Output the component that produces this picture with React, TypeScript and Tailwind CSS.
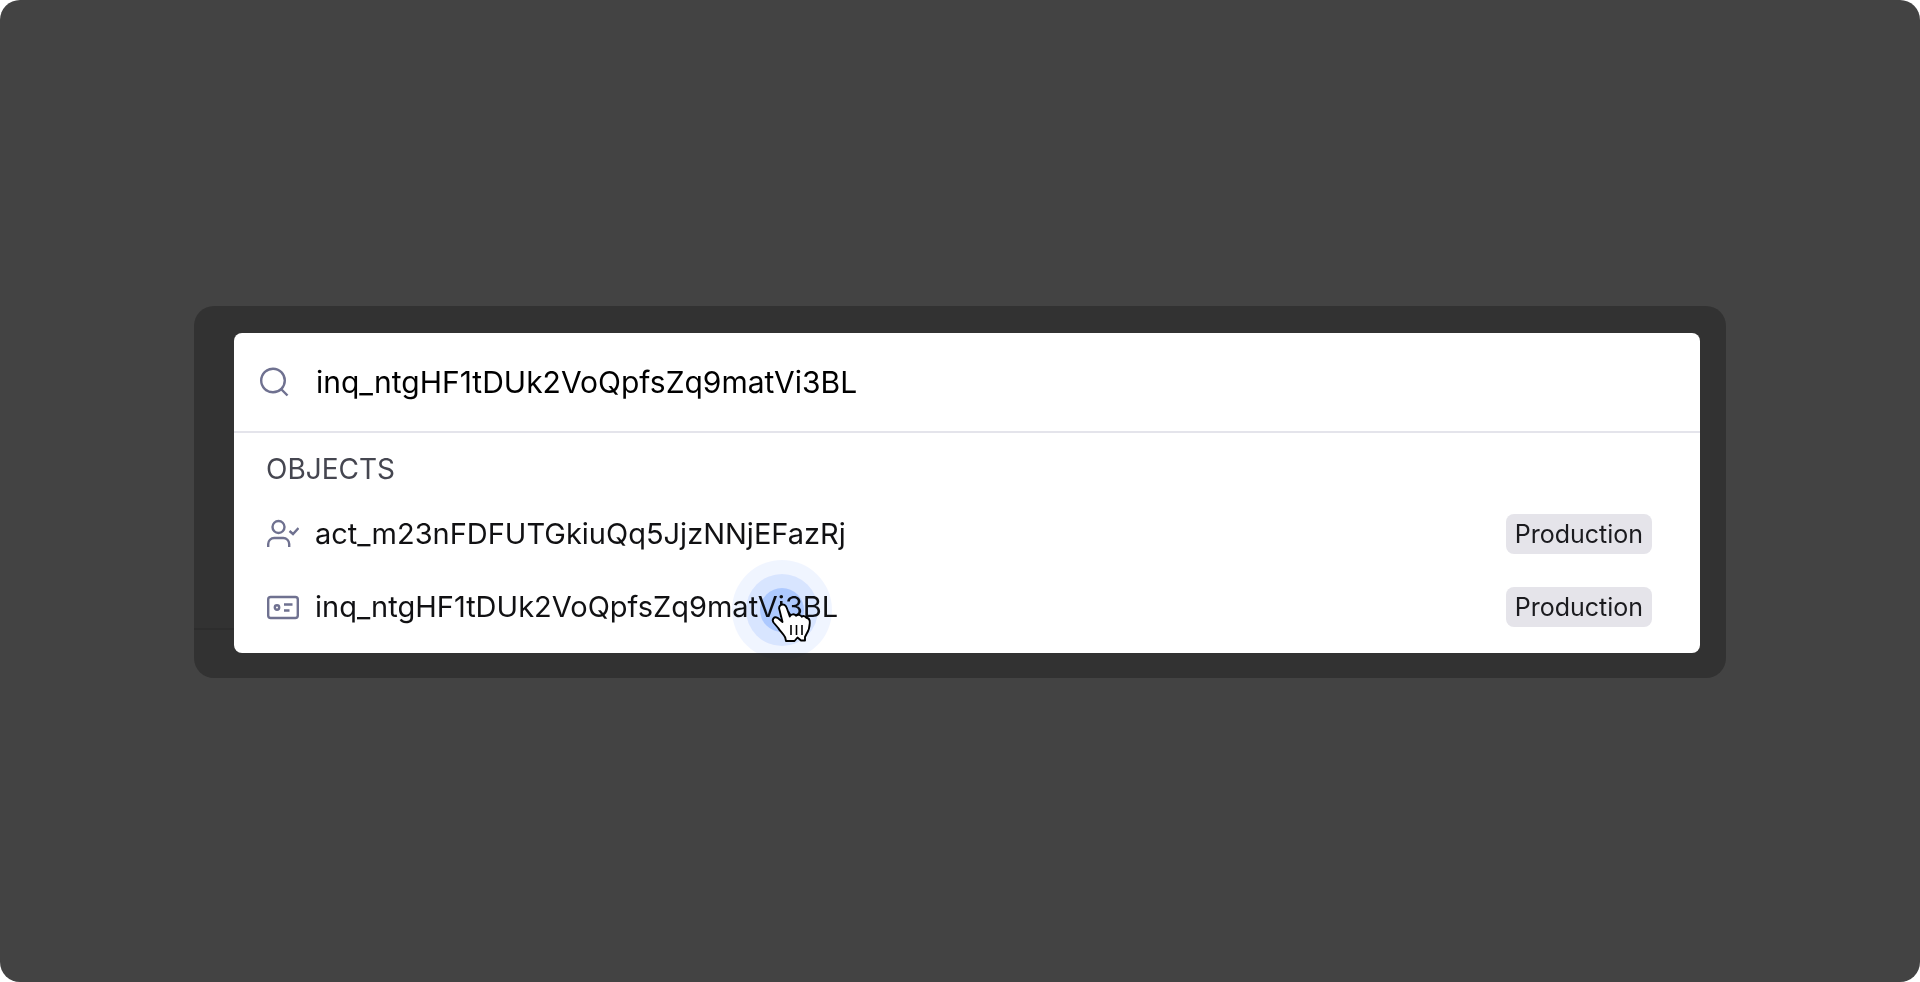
import React from "react";

interface SearchResult {
  id: string;
  type: "account" | "inquiry";
  environment: string;
}

const results: SearchResult[] = [
  { id: "act_m23nFDFUTGkiuQq5JjzNNjEFazRj", type: "account", environment: "Production" },
  { id: "inq_ntgHF1tDUk2VoQpfsZq9matVi3BL", type: "inquiry", environment: "Production" },
];

const SearchIcon: React.FC = () => (
  <svg width="32" height="32" viewBox="0 0 32 32" fill="none" stroke="#6f7190" strokeWidth="2.4" aria-hidden="true">
    <circle cx="15" cy="14.5" r="11.8" />
    <path d="M22.5 22.5l7 7" />
  </svg>
);

const AccountIcon: React.FC = () => (
  <svg width="32" height="32" viewBox="0 0 32 32" fill="none" stroke="#6f7190" strokeWidth="2.4" aria-hidden="true">
    <circle cx="11.5" cy="9" r="6" />
    <path d="M1.2 29v-3a6 6 0 0 1 6-6h9a6 6 0 0 1 6 6v3" />
    <path d="M22.5 13l3.500 3 5.500-6" />
  </svg>
);

const InquiryIcon: React.FC = () => (
  <svg width="32" height="32" viewBox="0 0 32 32" fill="none" stroke="#6f7190" strokeWidth="2.4" aria-hidden="true">
    <rect x="1.2" y="6" width="29.6" height="21" rx="2.5" />
    <circle cx="10" cy="16.5" r="2.2" />
    <path d="M17 13.5h8.5M17 19.5h5.5" />
  </svg>
);

const ClickMarker: React.FC = () => (
  <div className="pointer-events-none absolute -top-2.5 left-[498px]" aria-hidden="true">
    <svg className="mix-blend-multiply" width="100" height="100" viewBox="0 0 100 100">
      <circle cx="50" cy="50" r="50" fill="#0058ff" fillOpacity="0.06" />
      <circle cx="50" cy="50" r="36" fill="#0058ff" fillOpacity="0.1" />
      <circle cx="50" cy="50" r="22" fill="#0058ff" fillOpacity="0.2" />
    </svg>
    <svg className="absolute inset-0" width="100" height="100" viewBox="0 0 100 100">
      <path
        d="M49 45c2.500-1.300 4.800 0 5.800 3l3 8.500c1-2.500 4.700-3 6.200-.7 1.800-1.700 4.700-1.200 5.700.9 1.500-1.200 3.500-.8 4.600 1 2.500.3 3.700 2.300 3.500 5.300-.1 4.500-1 7.500-3.300 11l-1.500 3v3.500h-4l-3.500-3-3 3.500H54l-.8-3.500c-2-4-5-6-7-9.500L41.500 62.500c-2-3 .5-6.500 4-4.700l5 4.200L47.500 50c-.8-2.200-.3-4 1.500-5z"
        fill="white"
        stroke="black"
        strokeWidth="1.9"
        strokeLinejoin="round"
      />
      <path d="M59 65v10M64.500 65v10M70 65v10" stroke="black" strokeWidth="1.6" />
    </svg>
  </div>
);

const ResultRow: React.FC<{ result: SearchResult; active: boolean }> = ({ result, active }) => (
  <li className="relative">
    <button type="button" className="flex h-[73px] w-full cursor-pointer items-center pr-12 pl-[33px] text-left">
      {result.type === "account" ? <AccountIcon /> : <InquiryIcon />}
      <span className="ml-4 flex-1 text-[29px] leading-9 text-[#111113]">{result.id}</span>
      <span className="rounded-lg bg-[#e5e4ea] px-[9px] text-[25px] leading-10 text-[#1b1b1f]">
        {result.environment}
      </span>
    </button>
    {active && <ClickMarker />}
  </li>
);

const App: React.FC = () => {
  const [query, setQuery] = React.useState("inq_ntgHF1tDUk2VoQpfsZq9matVi3BL");

  return (
    <div className="bg-white font-[Inter,sans-serif]">
      <main className="flex min-h-screen items-center rounded-[20px] bg-[#434343] px-[194px] pt-0.5">
        <section className="relative w-full rounded-[20px] bg-[#323232] pt-[27px] pr-[26px] pb-[25px] pl-10">
          {/* edge of the dimmed page behind the dialog */}
          <div className="absolute bottom-12 left-0 h-0.5 w-10 bg-[#2d2d2d]" />
          <div className="rounded-lg bg-white">
            <label className="flex h-[100px] items-center border-b-2 border-[#e4e4eb] pl-6">
              <SearchIcon />
              <input
                type="text"
                aria-label="Search"
                value={query}
                onChange={(e) => setQuery(e.target.value)}
                className="ml-[26px] min-w-0 flex-1 text-[30px] leading-10 text-black outline-none"
              />
            </label>
            <h2 className="px-8 pt-4 text-[28px] leading-10 text-[#454650]">OBJECTS</h2>
            <ul className="pt-2 pb-2.5">
              {results.map((result) => (
                <ResultRow key={result.id} result={result} active={result.type === "inquiry"} />
              ))}
            </ul>
          </div>
        </section>
      </main>
    </div>
  );
};

export default App;
